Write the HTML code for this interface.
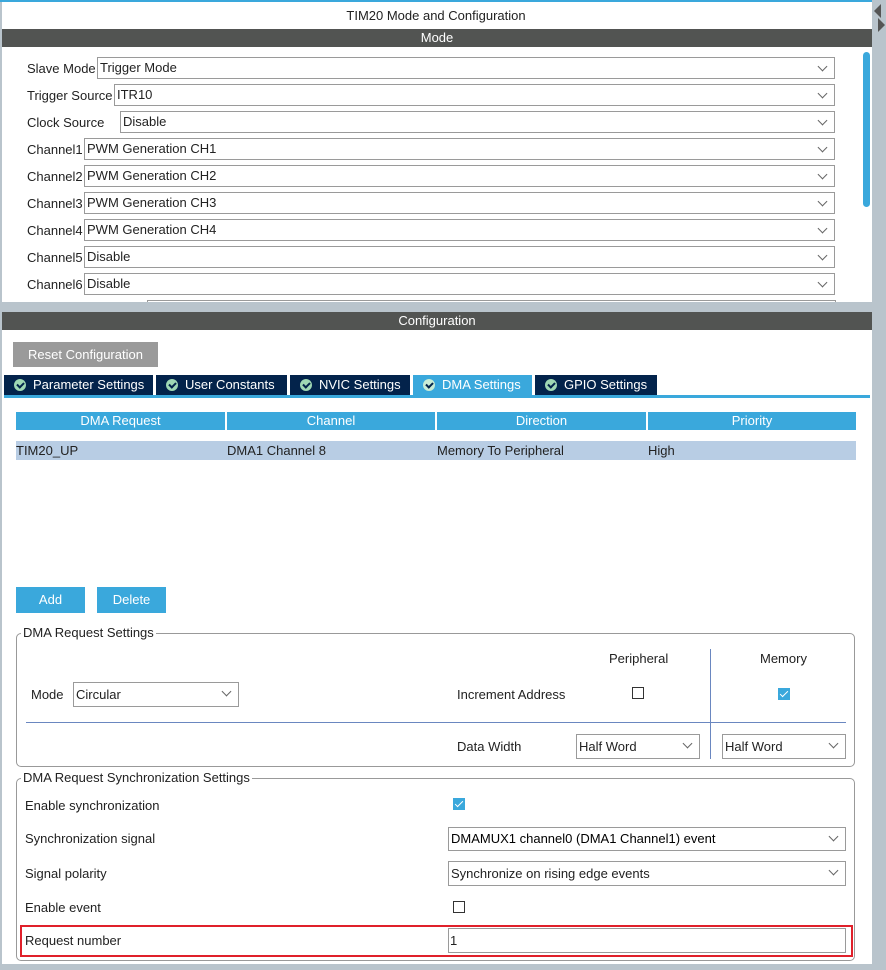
<!DOCTYPE html>
<html><head><meta charset="utf-8"><style>
*{box-sizing:border-box;margin:0;padding:0}
body{width:886px;height:970px;background:#b9c4cc;font-family:"Liberation Sans",sans-serif;font-size:13px;color:#222;position:relative;overflow:hidden}
.a{position:absolute}
.sel{position:absolute;border:1px solid #9a9a9a;background:#fff;height:22px;line-height:20px;padding-left:2px;font-size:13px;white-space:nowrap}
.sel:after{content:"";position:absolute;right:8px;top:5px;width:6px;height:6px;border-right:1px solid #666;border-bottom:1px solid #666;transform:rotate(45deg)}
.lbl{position:absolute;font-size:13px;white-space:nowrap}
.tab{position:absolute;top:375px;height:20px;background:#03234b;color:#fff;line-height:20px;font-size:13px;padding-left:29px}
.tab i{position:absolute;left:10px;top:4px;width:12px;height:12px;border-radius:50%;background:#9fd8b4}
.tab i:after{content:"";position:absolute;left:4px;top:2px;width:3px;height:5px;border-right:2px solid #03234b;border-bottom:2px solid #03234b;transform:rotate(45deg)}
.th{position:absolute;top:412px;height:18px;background:#3aa8dc;color:#fff;text-align:center;line-height:18px}
.td{position:absolute;top:441px;height:19px;line-height:19px}
.cb{position:absolute;width:12px;height:12px;border:1px solid #333;background:#fff}
.cbc{position:absolute;width:12px;height:12px;background:#3aa8dc}
.cbc:after{content:"";position:absolute;left:4px;top:1px;width:3px;height:7px;border-right:1.5px solid #fff;border-bottom:1.5px solid #fff;transform:rotate(45deg)}
.fs{position:absolute;border:1px solid #999;border-radius:5px}
.leg{position:absolute;background:#fff;padding:0 2px;top:-9px;left:4px;font-size:13px}
</style></head><body>
<div class="a" style="left:0;top:0;width:872px;height:2px;background:#3aa8dc"></div>
<div class="a" style="left:2px;top:2px;width:870px;height:300px;background:#fff"></div>
<div class="lbl" style="left:0;width:872px;top:8px;text-align:center">TIM20 Mode and Configuration</div>
<div class="a" style="left:2px;top:29px;width:870px;height:18px;background:#525452;color:#fff;text-align:center;line-height:18px">Mode</div>
<div class="a" style="left:863px;top:52px;width:7px;height:155px;background:#3aa8dc;border-radius:4px"></div>
<div class="a" style="left:874px;top:4px;width:0;height:0;border-top:7px solid transparent;border-bottom:7px solid transparent;border-right:7px solid #555"></div>
<div class="a" style="left:878px;top:18px;width:0;height:0;border-top:7px solid transparent;border-bottom:7px solid transparent;border-left:7px solid #555"></div>

<div class="lbl" style="left:27px;top:61px">Slave Mode</div><div class="sel" style="left:97px;top:57px;width:738px">Trigger Mode</div>
<div class="lbl" style="left:27px;top:88px">Trigger Source</div><div class="sel" style="left:114px;top:84px;width:721px">ITR10</div>
<div class="lbl" style="left:27px;top:115px">Clock Source</div><div class="sel" style="left:120px;top:111px;width:715px">Disable</div>
<div class="lbl" style="left:27px;top:142px">Channel1</div><div class="sel" style="left:84px;top:138px;width:751px">PWM Generation CH1</div>
<div class="lbl" style="left:27px;top:169px">Channel2</div><div class="sel" style="left:84px;top:165px;width:751px">PWM Generation CH2</div>
<div class="lbl" style="left:27px;top:196px">Channel3</div><div class="sel" style="left:84px;top:192px;width:751px">PWM Generation CH3</div>
<div class="lbl" style="left:27px;top:223px">Channel4</div><div class="sel" style="left:84px;top:219px;width:751px">PWM Generation CH4</div>
<div class="lbl" style="left:27px;top:250px">Channel5</div><div class="sel" style="left:84px;top:246px;width:751px">Disable</div>
<div class="lbl" style="left:27px;top:277px">Channel6</div><div class="sel" style="left:84px;top:273px;width:751px">Disable</div>
<div class="a" style="left:147px;top:300px;width:689px;height:2px;border:1px solid #9a9a9a;border-bottom:none"></div>

<div class="a" style="left:2px;top:312px;width:870px;height:652px;background:#fff"></div>
<div class="a" style="left:2px;top:312px;width:870px;height:18px;background:#525452;color:#fff;text-align:center;line-height:18px">Configuration</div>
<div class="a" style="left:13px;top:342px;width:145px;height:25px;background:#9a9a9a;color:#fff;text-align:center;line-height:25px">Reset Configuration</div>
<div class="tab" style="left:4px;width:149px">Parameter Settings<i></i></div>
<div class="tab" style="left:156px;width:131px">User Constants<i></i></div>
<div class="tab" style="left:290px;width:120px">NVIC Settings<i></i></div>
<div class="tab" style="left:413px;width:119px;background:#3aa8dc">DMA Settings<i style="background:#c8ecd6"></i></div>
<div class="tab" style="left:535px;width:122px">GPIO Settings<i></i></div>
<div class="a" style="left:4px;top:395px;width:866px;height:3px;background:#3aa8dc"></div>
<div class="th" style="left:16px;width:209px">DMA Request</div>
<div class="th" style="left:227px;width:208px">Channel</div>
<div class="th" style="left:437px;width:209px">Direction</div>
<div class="th" style="left:648px;width:208px">Priority</div>
<div class="a" style="left:16px;top:441px;width:840px;height:19px;background:#b8cde4"></div>
<div class="td" style="left:16px">TIM20_UP</div>
<div class="td" style="left:227px">DMA1 Channel 8</div>
<div class="td" style="left:437px">Memory To Peripheral</div>
<div class="td" style="left:648px">High</div>
<div class="a" style="left:16px;top:587px;width:69px;height:26px;background:#3aa8dc;color:#fff;text-align:center;line-height:26px">Add</div>
<div class="a" style="left:97px;top:587px;width:69px;height:26px;background:#3aa8dc;color:#fff;text-align:center;line-height:26px">Delete</div>

<div class="fs" style="left:16px;top:633px;width:839px;height:134px"><span class="leg">DMA Request Settings</span></div>
<div class="lbl" style="left:609px;top:651px">Peripheral</div>
<div class="lbl" style="left:760px;top:651px">Memory</div>
<div class="a" style="left:710px;top:649px;width:1px;height:110px;background:#6a87c0"></div>
<div class="lbl" style="left:31px;top:687px">Mode</div><div class="sel" style="left:73px;top:682px;width:166px;height:25px;line-height:23px">Circular</div>
<div class="lbl" style="left:457px;top:687px">Increment Address</div>
<div class="cb" style="left:632px;top:687px"></div>
<div class="cbc" style="left:778px;top:688px"></div>
<div class="a" style="left:26px;top:722px;width:820px;height:1px;background:#6a87c0"></div>
<div class="lbl" style="left:457px;top:739px">Data Width</div>
<div class="sel" style="left:576px;top:734px;width:124px;height:25px;line-height:23px">Half Word</div>
<div class="sel" style="left:722px;top:734px;width:124px;height:25px;line-height:23px">Half Word</div>

<div class="fs" style="left:16px;top:778px;width:839px;height:183px"><span class="leg">DMA Request Synchronization Settings</span></div>
<div class="lbl" style="left:25px;top:798px">Enable synchronization</div>
<div class="cbc" style="left:453px;top:798px"></div>
<div class="lbl" style="left:25px;top:831px">Synchronization signal</div>
<div class="sel" style="left:448px;top:827px;width:398px;height:24px;line-height:22px;color:#000">DMAMUX1 channel0 (DMA1 Channel1) event</div>
<div class="lbl" style="left:25px;top:866px">Signal polarity</div>
<div class="sel" style="left:448px;top:861px;width:398px;height:25px;line-height:23px">Synchronize on rising edge events</div>
<div class="lbl" style="left:25px;top:900px">Enable event</div>
<div class="cb" style="left:453px;top:901px"></div>
<div class="a" style="left:20px;top:925px;width:833px;height:32px;border:2px solid #e0202a"></div>
<div class="lbl" style="left:25px;top:933px">Request number</div>
<div class="a" style="left:448px;top:928px;width:398px;height:25px;border:1px solid #9a9a9a;line-height:23px;padding-left:1px">1</div>
</body></html>
